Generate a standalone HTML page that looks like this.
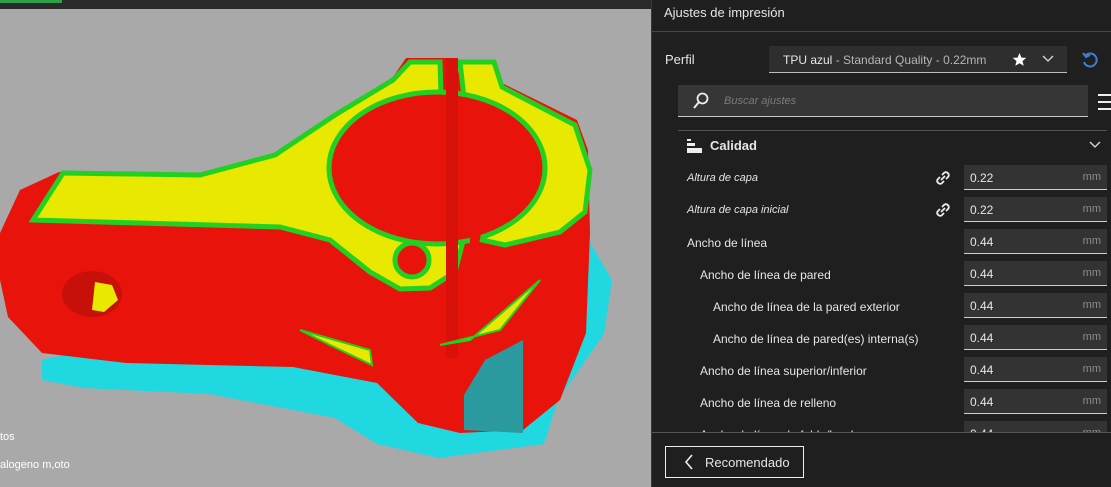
<!DOCTYPE html>
<html><head><meta charset="utf-8"><style>
*{margin:0;padding:0;box-sizing:border-box}
body{width:1111px;height:487px;overflow:hidden;background:#a9a9a9;font-family:"Liberation Sans",sans-serif;position:relative}
.abs{position:absolute}
#panel{left:651px;top:0;width:460px;height:487px;background:#1f1f1f;border-left:1px solid #3a3a3a}
.t{position:absolute;color:#e6e6e6;font-size:12px;white-space:nowrap}
.inp{position:absolute;left:312px;width:143px;height:25px;background:#333;border-bottom:1px solid #cfcfcf}
.inp span{position:absolute;left:6px;top:6px;color:#e6e6e6;font-size:12px}
.inp i{position:absolute;right:6px;top:6px;color:#8a8a8a;font-size:11px;font-style:normal}
</style></head><body>
<div class="abs" style="left:0;top:0;width:651px;height:9px;background:#2a2a2a"></div>
<div class="abs" style="left:0;top:0;width:62px;height:3px;background:#2fa04a"></div>
<svg class="abs" style="left:0;top:0" width="651" height="487">
<path d="M42,360 L42,380 L84,388 L209,394 L335,418 L377,444 L439,458 L544,444 L558,400 L604,334 L612,280 L592,246 L560,180 L455,170 L452,260 Z" fill="#1fd8e0"/>
<path d="M59,172 L209,173 L272,157 L335,113 L393,77 L406,58 L446,58 L454,100 L460,60 L494,60 L502,83 L577,120 L588,150 L590,233 L586,333 L560,400 L523,430 L460,433 L418,423 L377,383 L293,367 L126,363 L42,353 L8,317 L0,280 L0,233 L20,190 Z" fill="#e8140c"/>
<path d="M63,173 L200,175 L275,155 L335,115 L393,80 L410,62 L440,62 L445,225 L462,245 L455,272 L430,288 L400,289 L370,272 L330,240 L280,227 L33,220 Z" fill="#e8e800" stroke="#22d022" stroke-width="5"/>
<path d="M460,62 L494,62 L502,87 L575,125 L590,170 L585,212 L560,232 L505,245 L482,240 L478,222 Z" fill="#e8e800" stroke="#22d022" stroke-width="5"/>
<ellipse cx="437" cy="168" rx="108" ry="76" fill="#e8140c" stroke="#22d022" stroke-width="5"/>
<path d="M480,240 L482,225 L500,215 L470,215 L470,245 Z" fill="#e8140c"/>
<rect x="446" y="58" width="12" height="300" fill="#d8120a"/>
<circle cx="412" cy="260" r="17" fill="#e8140c" stroke="#22d022" stroke-width="5"/>
<ellipse cx="92" cy="294" rx="30" ry="23" fill="#c8100a"/>
<path d="M95,282 L112,285 L118,300 L104,312 L92,310 Z" fill="#e8e800"/>
<path d="M300,330 L370,350 L372,365 L330,345 Z" fill="#e8e800" stroke="#22d022" stroke-width="2"/>
<path d="M470,340 L540,280 L500,330 L440,345 Z" fill="#e8e800" stroke="#22d022" stroke-width="2"/>
<path d="M485,360 L523,340 L523,433 L464,430 L464,395 Z" fill="#2a9a9e"/>
<text x="0" y="440" fill="#fff" font-size="11" font-family="Liberation Sans">tos</text>
<text x="0" y="468" fill="#fff" font-size="11" font-family="Liberation Sans">alogeno m,oto</text>
</svg>
<div id="panel" class="abs">
 <div class="t" style="left:12px;top:5px;font-size:13px">Ajustes de impresión</div>
 <div class="abs" style="left:0;top:31px;width:460px;height:1px;background:#454545"></div>
 <div class="t" style="left:13px;top:52px;font-size:13px">Perfil</div>
 <div class="abs" style="left:117px;top:46px;width:298px;height:27px;background:#2e2e2e;border-bottom:1px solid #bdbdbd"></div>
 <div class="t" style="left:131px;top:53px">TPU azul<span style="color:#b5b5b5"> - Standard Quality - 0.22mm</span></div>
 <svg class="abs" style="left:360px;top:52px" width="15" height="15"><path d="M7.5,1 L9.4,5.6 L14.3,5.9 L10.5,9 L11.7,13.8 L7.5,11.2 L3.3,13.8 L4.5,9 L0.7,5.9 L5.6,5.6 Z" fill="#fff"/></svg>
 <svg class="abs" style="left:390px;top:55px" width="12" height="8"><path d="M1,1 L6,6 L11,1" stroke="#ddd" fill="none" stroke-width="1.3"/></svg>
 <svg class="abs" style="left:429px;top:51px" width="18" height="18"><path d="M4,5 A6.5,6.5 0 1 1 3,11" stroke="#3a7fd8" fill="none" stroke-width="2"/><path d="M2,2 L5,6 L9,4" stroke="#3a7fd8" fill="none" stroke-width="2"/></svg>
 <div class="abs" style="left:26px;top:85px;width:410px;height:32px;background:#363636;border-bottom:1px solid #c8c8c8"></div>
 <svg class="abs" style="left:40px;top:92px" width="18" height="18"><circle cx="10.5" cy="6.5" r="5" stroke="#eee" fill="none" stroke-width="1.8"/><path d="M7,10 L2,16" stroke="#eee" stroke-width="2"/></svg>
 <div class="t" style="left:72px;top:95px;font-style:italic;color:#7a7a7a;font-size:11px">Buscar ajustes</div>
 <div class="abs" style="left:446px;top:94px;width:14px;height:2px;background:#eee"></div>
 <div class="abs" style="left:446px;top:101px;width:14px;height:2px;background:#eee"></div>
 <div class="abs" style="left:446px;top:108px;width:14px;height:2px;background:#eee"></div>
 <div class="abs" style="left:26px;top:130px;width:429px;height:1px;background:#555"></div>
 <div class="abs" style="left:35px;top:139px;width:4px;height:2px;background:#eee"></div>
 <div class="abs" style="left:35px;top:143px;width:8px;height:3px;background:#eee"></div>
 <div class="abs" style="left:35px;top:148px;width:15px;height:5px;background:#eee"></div>
 <div class="t" style="left:58px;top:138px;font-size:13px;font-weight:bold">Calidad</div>
 <svg class="abs" style="left:437px;top:141px" width="12" height="8"><path d="M1,1 L6,6 L11,1" stroke="#ddd" fill="none" stroke-width="1.3"/></svg>

 <div class="t" style="left:35px;top:172px;font-style:italic;font-size:11px">Altura de capa</div>
 <svg class="abs" style="left:282px;top:169px" width="18" height="18"><path d="M8,6 L10.5,3.5 A3,3 0 0 1 14.5,7.5 L12,10" stroke="#eee" fill="none" stroke-width="1.8"/><path d="M10,12 L7.5,14.5 A3,3 0 0 1 3.5,10.5 L6,8" stroke="#eee" fill="none" stroke-width="1.8"/><path d="M7,11 L11,7" stroke="#eee" stroke-width="1.8"/></svg>
 <div class="inp" style="top:165px"><span>0.22</span><i>mm</i></div>
 <div class="t" style="left:35px;top:204px;font-style:italic;font-size:11px">Altura de capa inicial</div>
 <svg class="abs" style="left:282px;top:201px" width="18" height="18"><path d="M8,6 L10.5,3.5 A3,3 0 0 1 14.5,7.5 L12,10" stroke="#eee" fill="none" stroke-width="1.8"/><path d="M10,12 L7.5,14.5 A3,3 0 0 1 3.5,10.5 L6,8" stroke="#eee" fill="none" stroke-width="1.8"/><path d="M7,11 L11,7" stroke="#eee" stroke-width="1.8"/></svg>
 <div class="inp" style="top:197px"><span>0.22</span><i>mm</i></div>
 <div class="t" style="left:35px;top:236px">Ancho de línea</div>
 <div class="inp" style="top:229px"><span>0.44</span><i>mm</i></div>
 <div class="t" style="left:48px;top:268px">Ancho de línea de pared</div>
 <div class="inp" style="top:261px"><span>0.44</span><i>mm</i></div>
 <div class="t" style="left:61px;top:300px">Ancho de línea de la pared exterior</div>
 <div class="inp" style="top:293px"><span>0.44</span><i>mm</i></div>
 <div class="t" style="left:61px;top:332px">Ancho de línea de pared(es) interna(s)</div>
 <div class="inp" style="top:325px"><span>0.44</span><i>mm</i></div>
 <div class="t" style="left:48px;top:364px">Ancho de línea superior/inferior</div>
 <div class="inp" style="top:357px"><span>0.44</span><i>mm</i></div>
 <div class="t" style="left:48px;top:396px">Ancho de línea de relleno</div>
 <div class="inp" style="top:389px"><span>0.44</span><i>mm</i></div>
 <div class="t" style="left:48px;top:428px">Ancho de línea de falda/borde</div>
 <div class="inp" style="top:421px"><span>0.44</span><i>mm</i></div>
 <div class="abs" style="left:0;top:432px;width:460px;height:55px;background:#1f1f1f;border-top:1px solid #555"></div>
 <div class="abs" style="left:13px;top:446px;width:139px;height:32px;border:1px solid #eee"></div>
 <svg class="abs" style="left:32px;top:454px" width="10" height="16"><path d="M8,1 L2,8 L8,15" stroke="#eee" fill="none" stroke-width="1.6"/></svg>
 <div class="t" style="left:53px;top:455px;font-size:13px">Recomendado</div>
</div>
</body></html>
